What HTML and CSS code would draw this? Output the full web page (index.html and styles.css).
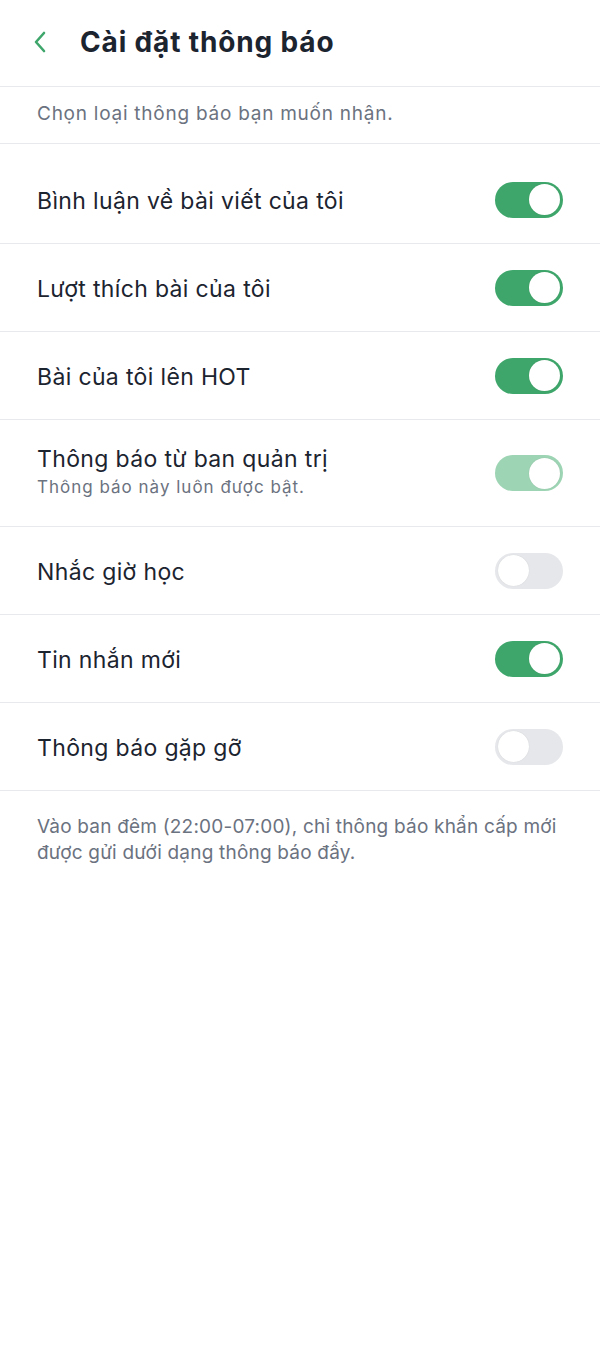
FILE: index.html
```html
<!DOCTYPE html>
<html lang="vi">
<head>
<meta charset="utf-8">
<title>Cài đặt thông báo</title>
<link rel="stylesheet" href="styles.css">
</head>
<body>
<div class="page">
  <header class="header">
    <button class="back" aria-label="Quay lại">
      <svg width="16" height="22" viewBox="0 0 16 22"><path d="M12 2 L4 11 L12 20" fill="none" stroke="#3ea66a" stroke-width="2.6" stroke-linecap="round" stroke-linejoin="round"/></svg>
    </button>
    <h1 class="title">Cài đặt thông báo</h1>
  </header>
  <p class="intro">Chọn loại thông báo bạn muốn nhận.</p>
  <ul class="list">
    <li class="row"><div class="label"><span class="name">Bình luận về bài viết của tôi</span></div><span class="toggle on"><span class="knob"></span></span></li>
    <li class="row"><div class="label"><span class="name">Lượt thích bài của tôi</span></div><span class="toggle on"><span class="knob"></span></span></li>
    <li class="row"><div class="label"><span class="name">Bài của tôi lên HOT</span></div><span class="toggle on"><span class="knob"></span></span></li>
    <li class="row tall"><div class="label"><span class="name">Thông báo từ ban quản trị</span><span class="hint">Thông báo này luôn được bật.</span></div><span class="toggle on locked"><span class="knob"></span></span></li>
    <li class="row"><div class="label"><span class="name">Nhắc giờ học</span></div><span class="toggle"><span class="knob"></span></span></li>
    <li class="row"><div class="label"><span class="name">Tin nhắn mới</span></div><span class="toggle on"><span class="knob"></span></span></li>
    <li class="row"><div class="label"><span class="name">Thông báo gặp gỡ</span></div><span class="toggle"><span class="knob"></span></span></li>
  </ul>
  <p class="footnote">Vào ban đêm (22:00-07:00), chỉ thông báo khẩn cấp mới được gửi dưới dạng thông báo đẩy.</p>
</div>
</body>
</html>
```
FILE: styles.css
```css
* { box-sizing: border-box; }
html, body { margin: 0; padding: 0; background: #fff; }
body { font-family: "Inter", "Noto Sans", sans-serif; color: #1c2430; }
.page { width: 600px; }
.header {
  height: 87px;
  display: flex;
  align-items: center;
  padding: 0 0 0 32px;
  border-bottom: 1px solid #e8e9ec;
}
.back {
  background: none; border: 0; padding: 0; margin: 0;
  width: 16px; height: 22px; display: flex; cursor: pointer;
  margin-top: -2px;
}
.title {
  margin: 0 0 0 32px;
  font-size: 28px;
  font-weight: 700;
  letter-spacing: 0.85px;
  color: #1c2430;
  margin-top: -2px;
}
.intro {
  margin: 0;
  height: 57px;
  padding: 0 37px 3px;
  display: flex;
  align-items: center;
  font-size: 19px;
  letter-spacing: 0.75px;
  color: #6b7280;
  border-bottom: 1px solid #e8e9ec;
}
.list { list-style: none; margin: 12px 0 0; padding: 0; }
.row {
  height: 88px;
  display: flex;
  align-items: center;
  justify-content: space-between;
  padding: 0 37px;
  border-bottom: 1px solid #e8e9ec;
}
.row.tall { height: 107px; }
.label { display: flex; flex-direction: column; padding-top: 2px; }
.row.tall .label { padding-top: 0; margin-top: -3px; }
.name { font-size: 23px; line-height: 28px; letter-spacing: 0.35px; color: #1c2430; }
.hint { font-size: 17px; line-height: 22px; letter-spacing: 1px; color: #6b7280; margin-top: 3px; }
.toggle {
  width: 68px; height: 36px; border-radius: 18px;
  background: #e5e7ea;
  display: flex; align-items: center; padding: 0 3px;
  flex-shrink: 0;
}
.toggle .knob {
  width: 31px; height: 31px; border-radius: 50%;
  background: #fff;
  box-shadow: 0 0 1px rgba(0,0,0,0.15);
}
.toggle.on { background: #3ea66a; justify-content: flex-end; }
.toggle.on.locked { background: #9dd4b3; }
.footnote {
  margin: 0;
  padding: 23px 37px;
  font-size: 19px;
  line-height: 26px;
  letter-spacing: 0.2px;
  color: #6b7280;
}
```
